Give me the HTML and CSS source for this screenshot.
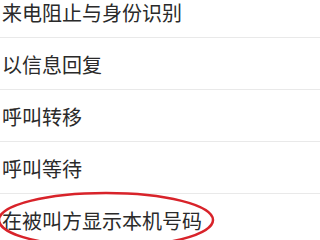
FILE: index.html
```
<!DOCTYPE html>
<html lang="zh-CN">
<head>
    <meta charset="UTF-8">
    <title>通话设置</title>
    <link rel="stylesheet" href="styles.css">
</head>
<body>
    <div class="screen">
        <ul class="menu">
            <li class="menu-item menu-item-top">来电阻止与身份识别</li>
            <li class="menu-item">以信息回复</li>
            <li class="menu-item">呼叫转移</li>
            <li class="menu-item">呼叫等待</li>
            <li class="menu-item">在被叫方显示本机号码</li>
        </ul>
        <svg class="mark" width="320" height="240" viewBox="0 0 320 240">
            <ellipse cx="106" cy="220" rx="107" ry="27" fill="none" stroke="#d8232a" stroke-width="2.5"/>
        </svg>
    </div>
</body>
</html>
```
FILE: styles.css
```
* {
    margin: 0;
    padding: 0;
    box-sizing: border-box;
}

body {
    background-color: #fff;
    font-family: "Noto Sans CJK SC", "Noto Sans", sans-serif;
}

.screen {
    position: relative;
    width: 320px;
    height: 240px;
    overflow: hidden;
}

.menu {
    list-style: none;
}

.menu-item {
    display: flex;
    align-items: center;
    height: 52px;
    padding-left: 2px;
    padding-top: 2px;
    border-bottom: 1px solid #e9e9e9;
    font-size: 20px;
    line-height: 1.2;
    color: #2a2a2a;
}

/* the top row is scrolled partly out of view */
.menu-item-top {
    height: 38px;
    align-items: flex-start;
    padding-top: 1px;
}

.mark {
    position: absolute;
    top: 0;
    left: 0;
}
```
